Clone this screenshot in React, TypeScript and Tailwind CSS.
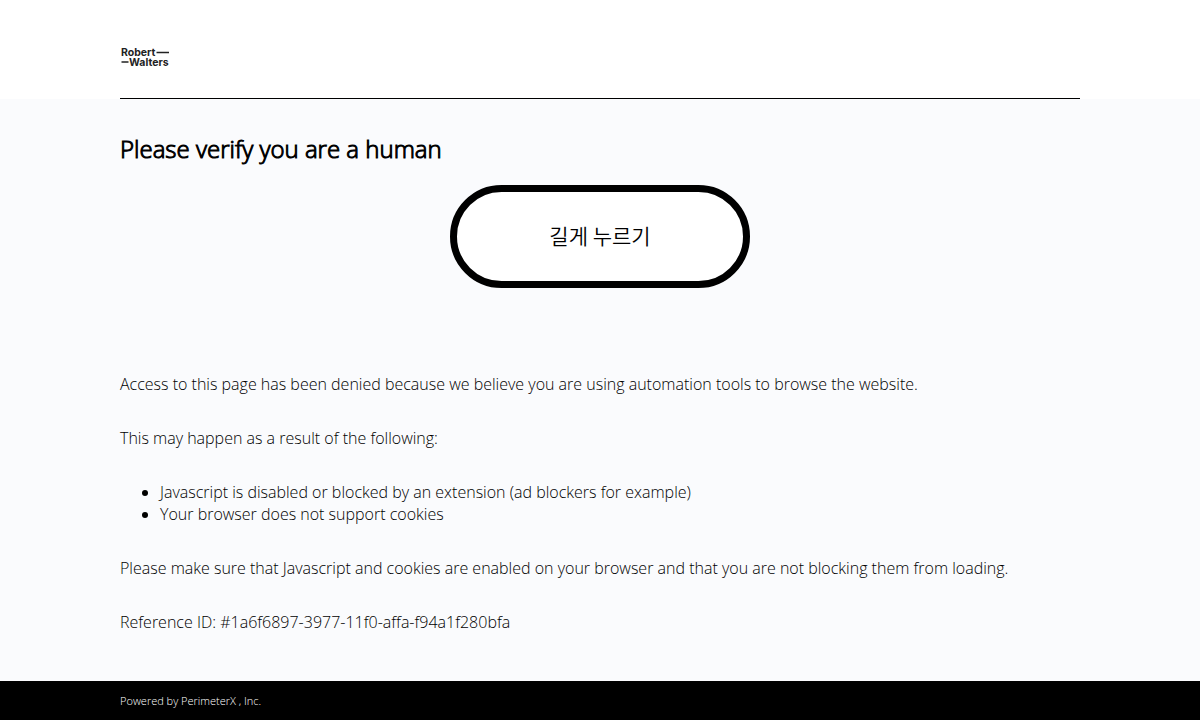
import type { ReactNode } from "react";

function Container({ children, className = "" }: { children: ReactNode; className?: string }) {
  return <div className={`mx-auto w-4/5 ${className}`}>{children}</div>;
}

function Logo() {
  return (
    <svg className="h-6 w-[50px]" viewBox="0 0 100 48" role="img" aria-label="Robert Walters">
      <text fill="#222" fontFamily="Inter, sans-serif" fontWeight="700" fontSize="21">
        <tspan x="2" y="22">Robert</tspan>
        <tspan x="18" y="42">Walters</tspan>
      </text>
      <path d="M73 15h25M3 34h14" stroke="#222" strokeWidth="2.6" />
    </svg>
  );
}

export default function App() {
  return (
    <div className="flex min-h-screen flex-col bg-[#fafbfd] font-['Open_Sans','Noto_Sans_CJK_KR',sans-serif] text-base leading-[22px] font-light text-black">
      <header className="bg-white">
        <Container className="border-b border-black pt-[45px] pb-[29px]">
          <Logo />
        </Container>
      </header>
      <main className="grow">
        <Container className="pt-[34px]">
          <h1 className="text-2xl leading-8 font-light [-webkit-text-stroke:1px_black]">Please verify you are a human</h1>
          <div className="mt-5 flex justify-center">
            <button
              type="button"
              className="h-[103px] w-[300px] rounded-full border-7 border-black bg-white pb-1 font-['Noto_Sans_CJK_KR',sans-serif] text-[21px] leading-5 font-[350]"
            >
              길게 누르기
            </button>
          </div>
          <div className="mt-[85px] space-y-8">
            <p>Access to this page has been denied because we believe you are using automation tools to browse the website.</p>
            <p>This may happen as a result of the following:</p>
            <ul className="list-disc pl-10">
              <li>Javascript is disabled or blocked by an extension (ad blockers for example)</li>
              <li>Your browser does not support cookies</li>
            </ul>
            <p>Please make sure that Javascript and cookies are enabled on your browser and that you are not blocking them from loading.</p>
            <p>Reference ID: #1a6f6897-3977-11f0-affa-f94a1f280bfa</p>
          </div>
        </Container>
      </main>
      <footer className="bg-black py-3 text-[11px] leading-[15px] text-white">
        <Container>
          Powered by <a href="https://www.perimeterx.com/">PerimeterX</a> , Inc.
        </Container>
      </footer>
    </div>
  );
}
